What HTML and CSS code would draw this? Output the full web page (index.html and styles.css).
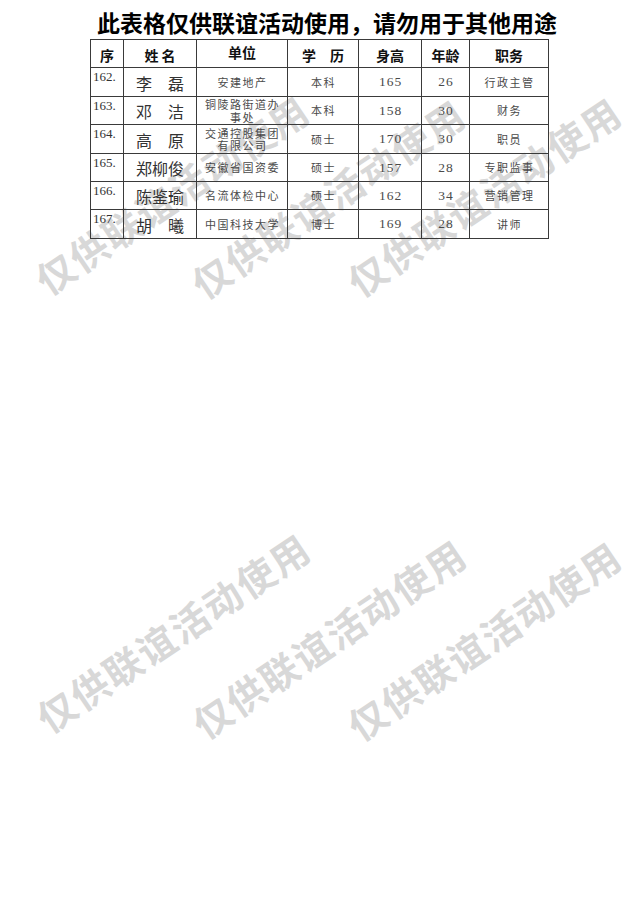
FILE: index.html
```html
<!DOCTYPE html>
<html lang="zh-CN">
<head>
<meta charset="utf-8">
<title>联谊活动名单</title>
<link rel="stylesheet" href="styles.css">
</head>
<body>
<div class="page">
  <h1 class="title">此表格仅供联谊活动使用，请勿用于其他用途</h1>
  <table class="roster">
    <colgroup>
      <col class="c-seq"><col class="c-name"><col class="c-unit"><col class="c-edu"><col class="c-ht"><col class="c-age"><col class="c-job">
    </colgroup>
    <thead>
      <tr class="head">
        <th>序</th>
        <th class="sp">姓名</th>
        <th class="up">单位</th>
        <th>学　历</th>
        <th>身高</th>
        <th>年龄</th>
        <th>职务</th>
      </tr>
    </thead>
    <tbody>
      <tr class="r-a">
        <td class="seq">162.</td>
        <td class="name">李　磊</td>
        <td class="txt">安建地产</td>
        <td class="txt">本科</td>
        <td class="num">165</td>
        <td class="num">26</td>
        <td class="txt">行政主管</td>
      </tr>
      <tr class="r-b">
        <td class="seq">163.</td>
        <td class="name">邓　洁</td>
        <td class="txt two"><span class="ln">铜陵路街道办</span><span class="ln">事处</span></td>
        <td class="txt">本科</td>
        <td class="num">158</td>
        <td class="num">30</td>
        <td class="txt">财务</td>
      </tr>
      <tr class="r-a">
        <td class="seq">164.</td>
        <td class="name">高　原</td>
        <td class="txt two"><span class="ln">交通控股集团</span><span class="ln">有限公司</span></td>
        <td class="txt">硕士</td>
        <td class="num">170</td>
        <td class="num">30</td>
        <td class="txt">职员</td>
      </tr>
      <tr class="r-b">
        <td class="seq">165.</td>
        <td class="name">郑柳俊</td>
        <td class="txt">安徽省国资委</td>
        <td class="txt">硕士</td>
        <td class="num">157</td>
        <td class="num">28</td>
        <td class="txt">专职监事</td>
      </tr>
      <tr class="r-b">
        <td class="seq">166.</td>
        <td class="name">陈鉴瑜</td>
        <td class="txt">名流体检中心</td>
        <td class="txt">硕士</td>
        <td class="num">162</td>
        <td class="num">34</td>
        <td class="txt">营销管理</td>
      </tr>
      <tr class="r-a">
        <td class="seq">167.</td>
        <td class="name">胡　曦</td>
        <td class="txt">中国科技大学</td>
        <td class="txt">博士</td>
        <td class="num">169</td>
        <td class="num">28</td>
        <td class="txt">讲师</td>
      </tr>
    </tbody>
  </table>

  <div class="watermarks" aria-hidden="true">
    <span class="wm wm1">仅供联谊活动使用</span>
    <span class="wm wm2">仅供联谊活动使用</span>
    <span class="wm wm3">仅供联谊活动使用</span>
    <span class="wm wm4">仅供联谊活动使用</span>
    <span class="wm wm5">仅供联谊活动使用</span>
    <span class="wm wm6">仅供联谊活动使用</span>
  </div>
</div>
</body>
</html>
```
FILE: styles.css
```css
html, body {
  margin: 0;
  padding: 0;
  background: #ffffff;
}

.page {
  position: relative;
  width: 636px;
  height: 900px;
  overflow: hidden;
  padding-top: 7px;
  box-sizing: border-box;
  font-family: "Noto Sans CJK SC", "Noto Sans", sans-serif;
}

.title {
  position: relative;
  z-index: 2;
  margin: 0 0 0 97px;
  font-size: 23px;
  line-height: 30px;
  height: 32px;
  font-weight: 700;
  color: #000;
  white-space: nowrap;
}

.roster {
  position: relative;
  z-index: 1;
  margin-left: 90px;
  border-collapse: collapse;
  table-layout: fixed;
  width: 458px;
  background: transparent;
}

.c-seq { width: 33px; }
.c-name { width: 73px; }
.c-unit { width: 91px; }
.c-edu { width: 71px; }
.c-ht { width: 63px; }
.c-age { width: 48px; }
.c-job { width: 79px; }

.roster th,
.roster td {
  border: 1px solid #3a3a3a;
  padding: 0;
  text-align: center;
  box-sizing: border-box;
  overflow: hidden;
}

.roster tr.head { height: 28px; }
.roster tr.r-a { height: 29px; }
.roster tr.r-b { height: 28px; }

.roster th {
  font-size: 14px;
  font-weight: 700;
  color: #111;
  line-height: 14px;
  padding-top: 3px;
}

.roster th.sp { letter-spacing: 3px; padding-left: 3px; }
.roster th.up { vertical-align: top; padding-top: 5px; }

.roster td {
  color: #4a4a4a;
}

.roster td.seq {
  vertical-align: top;
  text-align: left;
  padding-left: 2px;
  padding-top: 2px;
  font-family: "Liberation Serif", serif;
  font-size: 13px;
  line-height: 14px;
  color: #333;
}

.roster td.name {
  vertical-align: bottom;
  padding-bottom: 4px;
  font-size: 16px;
  line-height: 18px;
  color: #333;
}

.roster td.txt {
  font-size: 11px;
  line-height: 13px;
  letter-spacing: 1.5px;
  padding-left: 1px;
}

.roster td.two {
  line-height: 12.5px;
}

.roster td.two .ln {
  display: block;
  height: 12.5px;
  white-space: nowrap;
}

.roster td.num {
  font-family: "Liberation Serif", serif;
  font-size: 13.5px;
  line-height: 14px;
  letter-spacing: 1px;
  padding-left: 1px;
}

.watermarks {
  position: absolute;
  inset: 0;
  z-index: 0;
  pointer-events: none;
}

.wm {
  position: absolute;
  transform: translate(-50%, -50%) rotate(-34deg);
  font-size: 38px;
  line-height: 40px;
  font-weight: 700;
  color: #d8d8d8;
  white-space: nowrap;
  letter-spacing: 2px;
}

.wm1 { left: 172px; top: 194px; }
.wm2 { left: 328px; top: 198px; }
.wm3 { left: 484px; top: 196px; }
.wm4 { left: 173px; top: 632px; }
.wm5 { left: 329px; top: 638px; }
.wm6 { left: 484px; top: 640px; }
```
